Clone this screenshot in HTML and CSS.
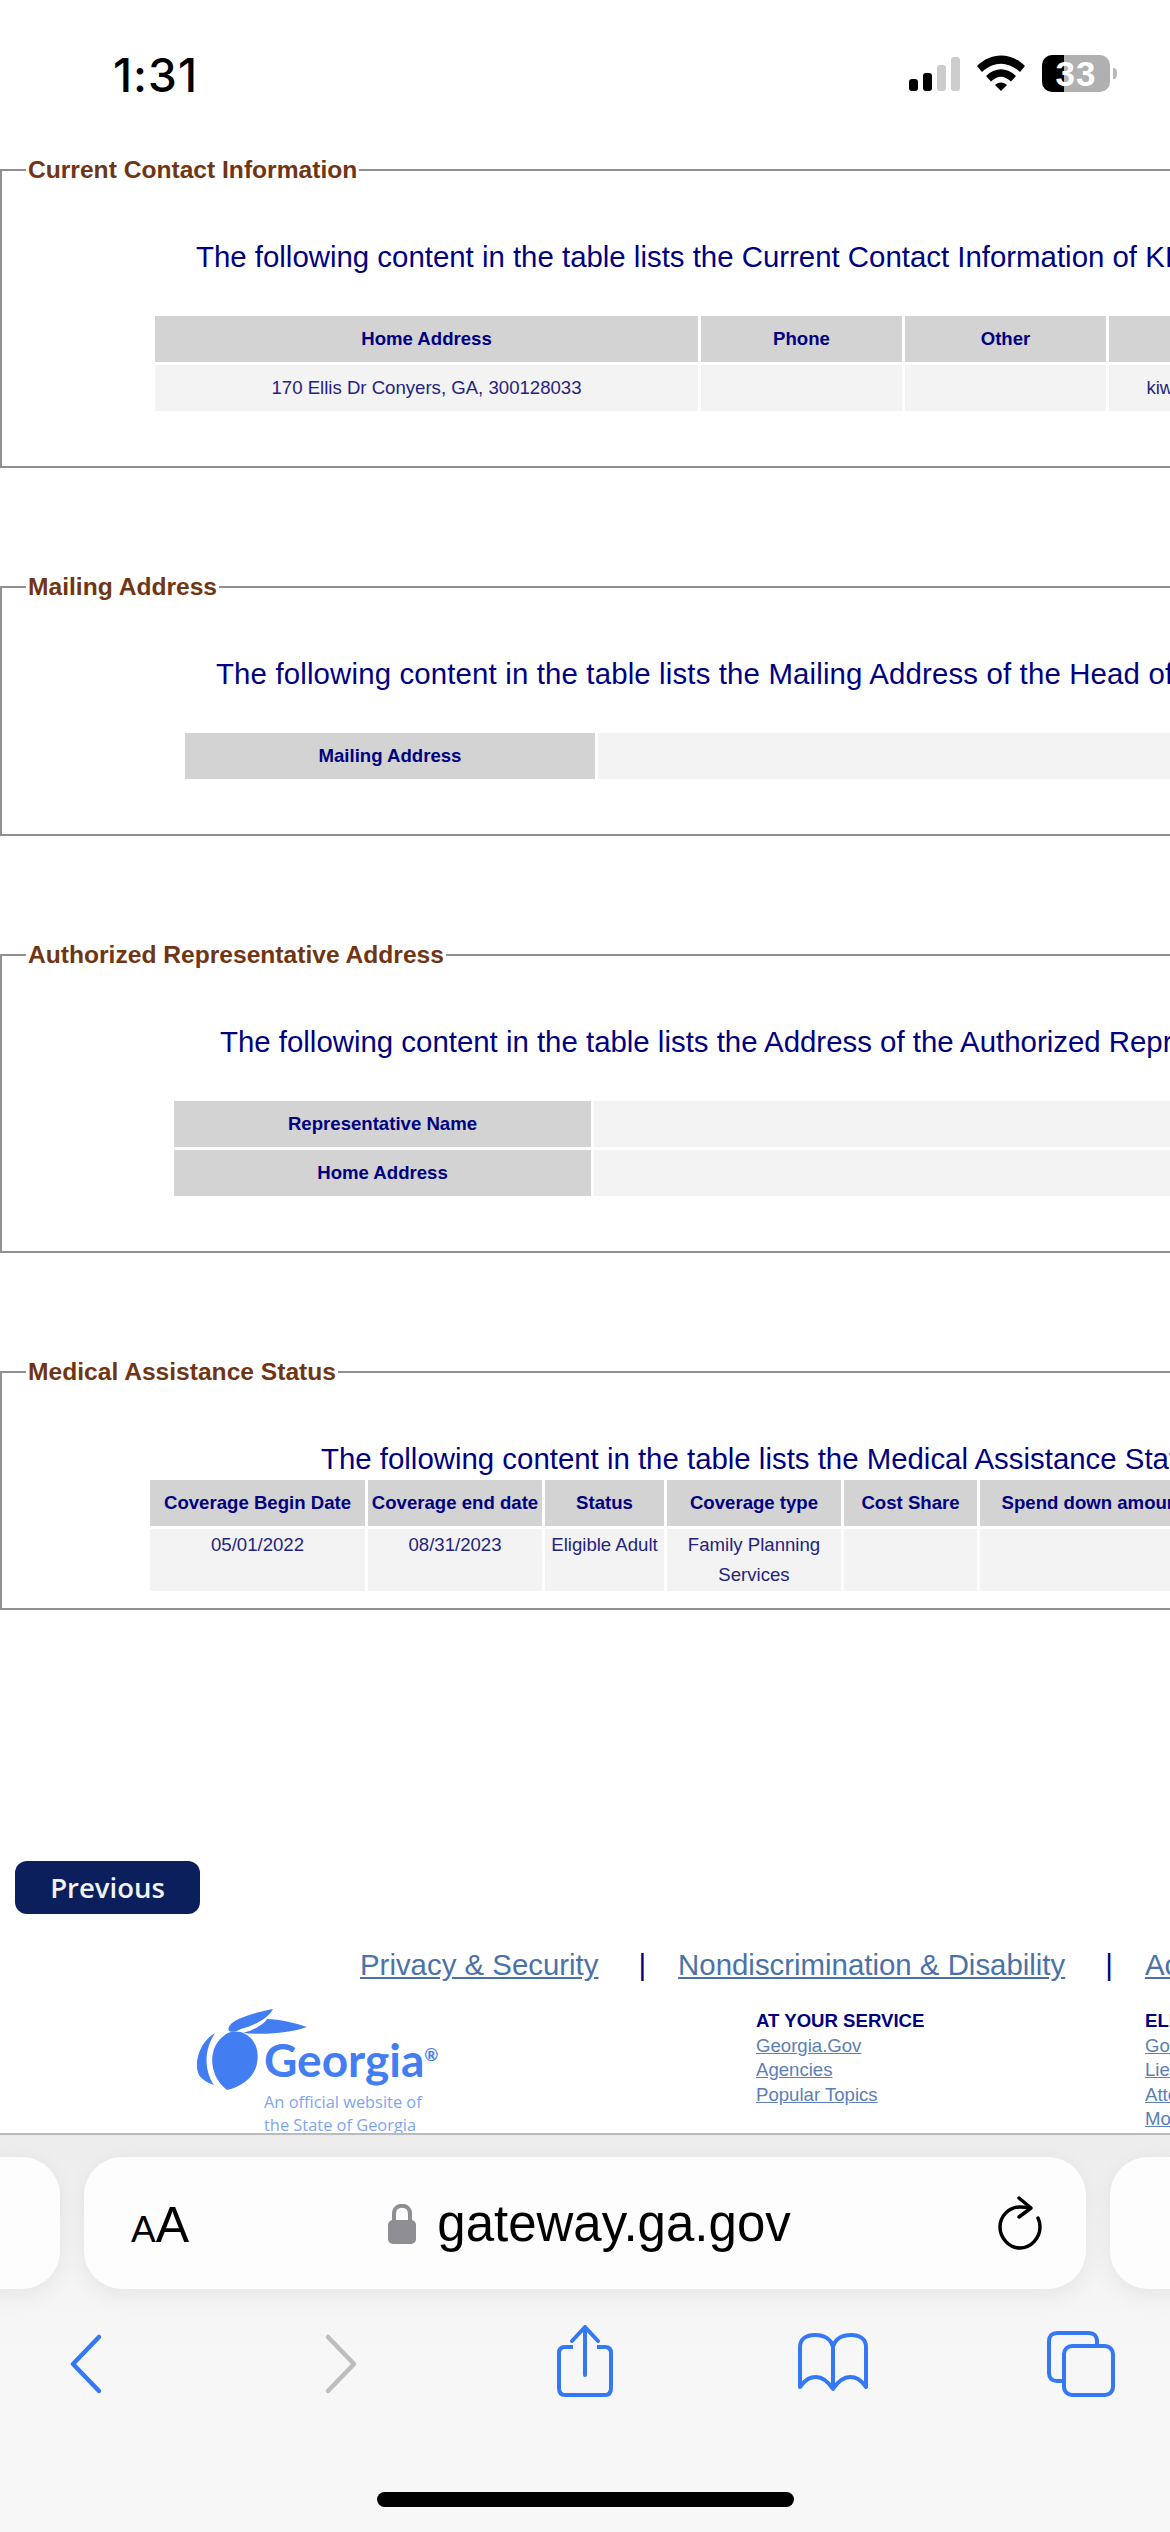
FILE: index.html
```html
<!DOCTYPE html>
<html lang="en">
<head>
    <meta charset="UTF-8">
    <meta name="viewport" content="width=device-width, initial-scale=1.0">
    <title>Gateway</title>
    <link rel="stylesheet" href="styles.css">
</head>
<body>
    <!-- Status bar -->
    <div class="status-bar">
        <span class="clock">1:31</span>
        <div class="status-icons">
            <div class="signal">
                <span class="bar bar-1"></span>
                <span class="bar bar-2"></span>
                <span class="bar bar-3"></span>
                <span class="bar bar-4"></span>
            </div>
            <svg class="wifi" viewBox="0 0 48 36">
                <path d="M0 11 C14 -3 34 -3 48 11 L43 17 C31 6 17 6 5 17Z" fill="#000"/>
                <path d="M9 21 C18 12 30 12 39 21 L34 26.500 C27 20 21 20 14 26.500Z" fill="#000"/>
                <path d="M18 30 C21 26.500 27 26.500 30 30 L24 36Z" fill="#000"/>
            </svg>
            <div class="battery">
                <div class="battery-body"><span>33</span></div>
                <span class="battery-nub"></span>
            </div>
        </div>
    </div>

    <!-- Page content -->
    <div class="page">
        <fieldset class="box">
            <legend>Current Contact Information</legend>
            <p class="intro intro-contact">The following content in the table lists the Current Contact Information of KIA</p>
            <table class="grid grid-contact">
                <tr>
                    <th class="col-address">Home Address</th>
                    <th class="col-small">Phone</th>
                    <th class="col-small">Other</th>
                    <th class="col-email">Email</th>
                </tr>
                <tr>
                    <td>170 Ellis Dr Conyers, GA, 300128033</td>
                    <td></td>
                    <td></td>
                    <td>kiwana@mail.com</td>
                </tr>
            </table>
        </fieldset>

        <fieldset class="box">
            <legend>Mailing Address</legend>
            <p class="intro intro-mailing">The following content in the table lists the Mailing Address of the Head of Household</p>
            <table class="grid grid-mailing">
                <tr>
                    <th class="col-label">Mailing Address</th>
                    <td class="col-value"></td>
                </tr>
            </table>
        </fieldset>

        <fieldset class="box">
            <legend>Authorized Representative Address</legend>
            <p class="intro intro-rep">The following content in the table lists the Address of the Authorized Representative</p>
            <table class="grid grid-rep">
                <tr>
                    <th class="col-label">Representative Name</th>
                    <td class="col-value"></td>
                </tr>
                <tr>
                    <th>Home Address</th>
                    <td></td>
                </tr>
            </table>
        </fieldset>

        <fieldset class="box box-compact">
            <legend>Medical Assistance Status</legend>
            <p class="intro intro-status">The following content in the table lists the Medical Assistance Status</p>
            <table class="grid grid-status">
                <tr>
                    <th class="col-begin">Coverage Begin Date</th>
                    <th class="col-end">Coverage end date</th>
                    <th class="col-status">Status</th>
                    <th class="col-type">Coverage type</th>
                    <th class="col-cost">Cost Share</th>
                    <th class="col-spend">Spend down amount</th>
                </tr>
                <tr>
                    <td>05/01/2022</td>
                    <td>08/31/2023</td>
                    <td>Eligible Adult</td>
                    <td>Family Planning Services</td>
                    <td></td>
                    <td></td>
                </tr>
            </table>
        </fieldset>

        <button class="previous">Previous</button>

        <!-- Footer -->
        <div class="footer-links">
            <a href="#">Privacy &amp; Security</a>
            <span class="sep">|</span>
            <a href="#">Nondiscrimination &amp; Disability</a>
            <span class="sep">|</span>
            <a href="#">Accessibility</a>
        </div>
        <div class="footer-columns">
            <div class="logo">
                <svg class="peach" viewBox="0 0 70 80">
                    <path d="M20 24 C6 32 -2 52 4 66 C8 72 14 74 19 76 C11 64 7 44 20 24Z" fill="#437df2"/>
                    <path d="M36 23 C52 20 66 34 62 54 C60 68 46 78 32 81 C20 72 15 56 18 44 C20 34 28 25 36 23Z" fill="#437df2"/>
                    <path d="M34 22 C30 14 48 6 78 0 C74 8 62 16 46 20 C42 22 38 24 34 22Z" fill="#437df2"/>
                    <path d="M48 24 C62 20 70 14 72 10 C84 10 100 14 112 18 C96 24 70 26 48 24Z" fill="#437df2"/>
                </svg>
                <div class="logo-text">
                    <div class="wordmark">Georgia<sup>®</sup></div>
                    <div class="tagline">An official website of<br>the State of Georgia</div>
                </div>
            </div>
            <div class="footer-col">
                <h4>AT YOUR SERVICE</h4>
                <a href="#">Georgia.Gov</a>
                <a href="#">Agencies</a>
                <a href="#">Popular Topics</a>
            </div>
            <div class="footer-col">
                <h4>ELECTED OFFICIALS</h4>
                <a href="#">Governor</a>
                <a href="#">Lieutenant Governor</a>
                <a href="#">Attorney General</a>
                <a href="#">More</a>
            </div>
        </div>
    </div>

    <!-- Safari toolbar -->
    <div class="toolbar">
        <div class="url-row">
            <div class="pill pill-side pill-left"></div>
            <div class="pill pill-main">
                <span class="aa"><small>A</small>A</span>
                <div class="address">
                    <svg class="lock" viewBox="0 0 28 40">
                        <path d="M6 18 V10 C6 -1 22 -1 22 10 V18" fill="none" stroke="#8e8e93" stroke-width="4"/>
                        <rect x="0" y="16" width="28" height="24" rx="5" fill="#8e8e93"/>
                    </svg>
                    <span class="url">gateway.ga.gov</span>
                </div>
                <svg class="reload" viewBox="0 0 44 54">
                    <path d="M32 12 C29 11.500 25 11 22 11 C11 11 2 20 2 31 C2 42 11 52 22 52 C33 52 42 42 42 31 C42 28 41.500 25 40 22" fill="none" stroke="#000" stroke-width="3.500" stroke-linecap="round"/>
                    <path d="M21 2 L33 12 L21 21" fill="none" stroke="#000" stroke-width="3.500" stroke-linecap="round" stroke-linejoin="round"/>
                </svg>
            </div>
            <div class="pill pill-side"></div>
        </div>
        <div class="nav-row">
            <svg class="nav-icon" viewBox="0 0 66 72" width="66" height="72">
                <path d="M37 12 L11 39 L37 66" fill="none" stroke="#3478f6" stroke-width="4.500" stroke-linecap="round" stroke-linejoin="round"/>
            </svg>
            <svg class="nav-icon" viewBox="0 0 66 72" width="66" height="72">
                <path d="M11 12 L37 39 L11 66" fill="none" stroke="#bdbdbd" stroke-width="4.500" stroke-linecap="round" stroke-linejoin="round"/>
            </svg>
            <svg class="nav-icon" viewBox="0 0 56 72" width="56" height="72">
                <path d="M16 22 H8 C4 22 2 24 2 28 V63 C2 68 4 70 8 70 H48 C52 70 54 68 54 63 V28 C54 24 52 22 48 22 H40" fill="none" stroke="#3478f6" stroke-width="4"/>
                <path d="M28 50 V3 M15 16 L28 2 L41 16" fill="none" stroke="#3478f6" stroke-width="4" stroke-linecap="round" stroke-linejoin="round"/>
            </svg>
            <svg class="nav-icon" viewBox="0 0 70 72" width="70" height="72">
                <g transform="translate(0 8)">
                    <path d="M35 14 C33 6 26 2 17 2 C8 2 2 6 2 14 V54 C8 46 12 44 18 44 C25 44 31 50 35 56 C39 50 45 44 52 44 C58 44 62 46 68 54 V14 C68 6 62 2 53 2 C44 2 37 6 35 14Z M35 14 V56" fill="none" stroke="#3478f6" stroke-width="4" stroke-linejoin="round"/>
                </g>
            </svg>
            <svg class="nav-icon" viewBox="0 0 68 72" width="68" height="72">
                <g transform="translate(0 6)">
                    <path d="M16 50 H10 C5 50 2 47 2 42 V10 C2 5 5 2 10 2 H42 C47 2 50 5 50 10 V14" fill="none" stroke="#3478f6" stroke-width="4"/>
                    <rect x="17" y="15" width="49" height="49" rx="8" fill="none" stroke="#3478f6" stroke-width="4"/>
                </g>
            </svg>
        </div>
        <div class="home-indicator"></div>
    </div>
</body>
</html>
```

FILE: styles.css
```css
html, body {
    margin: 0;
    padding: 0;
    height: 100%;
    overflow: hidden;
}
body {
    display: flex;
    flex-direction: column;
    height: 2532px;
    background-color: #ffffff;
    font-family: "Liberation Sans", Arial, sans-serif;
}

/* status bar */
.status-bar {
    flex: none;
    height: 128px;
    box-sizing: border-box;
    padding: 50px 53px 0 113px;
    display: flex;
    justify-content: space-between;
    align-items: flex-start;
}
.clock {
    font-family: Inter, "Liberation Sans", sans-serif;
    font-size: 46px;
    font-weight: 500;
    line-height: 50px;
    color: #000000;
    letter-spacing: 1px;
}
.status-icons {
    display: flex;
    align-items: flex-start;
    margin-top: 5px;
}
.signal {
    display: flex;
    align-items: flex-end;
    gap: 5px;
    height: 36px;
    margin-right: 17px;
}
.bar {
    width: 9px;
    border-radius: 3px;
    background-color: #000000;
}
.bar-1 { height: 12px; }
.bar-2 { height: 18px; }
.bar-3 { height: 26px; background-color: #cccccc; }
.bar-4 { height: 34px; background-color: #cccccc; }
.wifi {
    width: 48px;
    height: 36px;
    margin-right: 17px;
}
.battery {
    display: flex;
    align-items: center;
    height: 37px;
}
.battery-body {
    width: 68px;
    height: 37px;
    border-radius: 10px;
    background: linear-gradient(to right, #000000 22px, #b0b0b0 22px);
    text-align: center;
    color: #ffffff;
    font-size: 35px;
    font-weight: bold;
    line-height: 37px;
    letter-spacing: 1px;
}
.battery-nub {
    width: 4px;
    height: 11px;
    margin-left: 3px;
    border-radius: 0 4px 4px 0;
    background-color: #b9b9b9;
}

/* page */
.page {
    flex: 1;
    min-height: 0;
    overflow: hidden;
    padding-top: 28px;
}
.box {
    width: 1700px;
    box-sizing: border-box;
    margin: 0 0 105px 0;
    padding: 0 0 52px 0;
    border: 2px solid #909090;
    border-right: none;
    min-width: 0;
}
.box-compact {
    padding-bottom: 14px;
    margin-bottom: 251px;
}
.box legend {
    margin-left: 24px;
    padding: 0 2px;
    font-size: 24.600px;
    font-weight: bold;
    line-height: 28px;
    color: #703512;
    white-space: nowrap;
}
.intro {
    margin: 55px 0 38px 0;
    font-size: 29.400px;
    line-height: 36px;
    color: #000080;
    white-space: nowrap;
}
.box-compact .intro {
    margin-bottom: 0;
}
.intro-contact { padding-left: 194px; }
.intro-mailing { padding-left: 214px; letter-spacing: 0.150px; }
.intro-rep { padding-left: 218px; }
.intro-status { padding-left: 319px; }

/* tables */
.grid {
    table-layout: fixed;
    border-spacing: 3px;
    font-size: 18.600px;
    color: #000080;
}
.grid th {
    height: 46px;
    padding: 0;
    background-color: #d3d3d3;
    font-weight: bold;
    text-align: center;
}
.grid td {
    height: 46px;
    padding: 0;
    background-color: #f3f3f3;
    text-align: center;
    color: #23237f;
}
.grid-contact { margin-left: 150px; }
.grid-mailing { margin-left: 180px; }
.grid-rep { margin-left: 169px; }
.grid-status { margin-left: 145px; }
.col-address { width: 543px; }
.col-small { width: 201px; }
.col-email { width: 226px; }
.col-label { width: 410px; }
.col-value { width: 900px; }
.grid-rep .col-label { width: 417px; }
.col-begin { width: 215px; }
.col-end { width: 174px; }
.col-status { width: 119px; }
.col-type { width: 174px; }
.col-cost { width: 133px; }
.col-spend { width: 226px; }
.grid-status td {
    height: 62px;
    line-height: 30px;
    vertical-align: top;
    padding: 1px 0;
    box-sizing: border-box;
}

/* previous button */
.previous {
    display: block;
    width: 185px;
    height: 53px;
    margin-left: 15px;
    padding: 0;
    border: none;
    border-radius: 12px;
    background-color: #0a1f5c;
    color: #f2f2f2;
    font-family: "Open Sans", sans-serif;
    font-size: 27.500px;
    font-weight: 600;
}

/* footer */
.footer-links {
    display: flex;
    margin-top: 31px;
    padding-left: 360px;
    font-size: 29.400px;
    line-height: 40px;
    white-space: nowrap;
}
.footer-links a {
    color: #4a72a8;
}
.sep {
    color: #000080;
    margin: 0 32px 0 40px;
}
.footer-columns {
    display: grid;
    grid-template-columns: 561px 389px 300px;
    margin-top: 24px;
    padding-left: 195px;
}
.logo {
    display: flex;
}
.peach {
    flex: none;
    width: 70px;
    height: 80px;
    overflow: visible;
}
.logo-text {
    margin-left: -1px;
    padding-top: 26px;
}
.wordmark {
    font-family: Lato, sans-serif;
    font-size: 46px;
    font-weight: bold;
    line-height: 50px;
    color: #437df2;
    white-space: nowrap;
}
.wordmark sup {
    font-size: 17px;
    line-height: 0;
}
.tagline {
    margin-top: 5px;
    font-family: "Open Sans", sans-serif;
    font-size: 16.400px;
    line-height: 23px;
    color: #7ea4f5;
    white-space: nowrap;
}
.footer-col {
    display: flex;
    flex-direction: column;
    align-items: flex-start;
    font-size: 18.600px;
    line-height: 24.500px;
    white-space: nowrap;
}
.footer-col h4 {
    margin: 0;
    font-size: 18.600px;
    color: #000080;
}
.footer-col a {
    color: #5b7fb5;
}

/* toolbar */
.toolbar {
    flex: none;
    height: 399px;
    box-sizing: border-box;
    border-top: 2px solid #bbbbbb;
    background: linear-gradient(to bottom, #ececec, #f3f3f3 90px, #f7f7f7 220px);
    overflow: hidden;
}
.url-row {
    display: flex;
    gap: 24px;
    margin-top: 22px;
}
.pill {
    flex: none;
    height: 132px;
    border-radius: 38px;
    background-color: #fdfdfd;
    box-shadow: 0 6px 24px rgba(0, 0, 0, 0.07);
}
.pill-side { width: 200px; }
.pill-left { margin-left: -140px; }
.pill-main {
    width: 1002px;
    display: flex;
    align-items: center;
    box-sizing: border-box;
    padding: 0 44px 0 47px;
}
.aa {
    font-size: 50px;
    line-height: 1;
    color: #000000;
    margin-top: 4px;
}
.aa small {
    font-size: 37px;
}
.address {
    flex: 1;
    display: flex;
    align-items: center;
    justify-content: center;
    gap: 21px;
    margin: 2px 8px 0 0;
}
.lock {
    width: 28px;
    height: 40px;
}
.url {
    font-size: 51px;
    line-height: 60px;
    color: #000000;
}
.reload {
    width: 44px;
    height: 54px;
}
.nav-row {
    display: grid;
    grid-template-columns: 255px 240px 241px 249px 1fr;
    margin-top: 36px;
    padding-left: 62px;
}
.home-indicator {
    width: 417px;
    height: 15px;
    margin: 95px auto 0 auto;
    border-radius: 8px;
    background-color: #000000;
}
```
